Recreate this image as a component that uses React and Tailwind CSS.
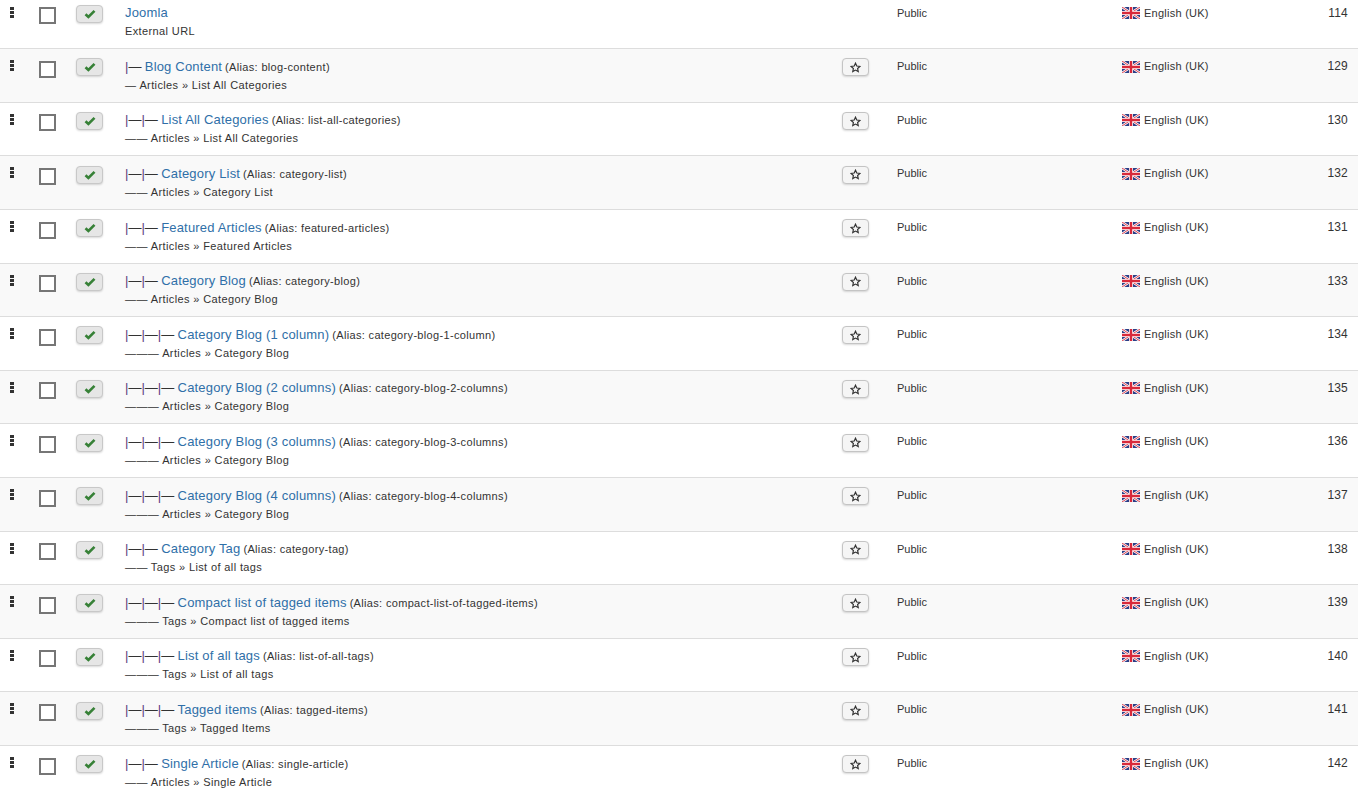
const rows = [
  { level: 0, title: "Joomla", alias: "", sub: "External URL", dashes: 0, id: 114, noStar: true },
  { level: 1, title: "Blog Content", alias: "blog-content", sub: "Articles » List All Categories", dashes: 1, id: 129 },
  { level: 2, title: "List All Categories", alias: "list-all-categories", sub: "Articles » List All Categories", dashes: 2, id: 130 },
  { level: 2, title: "Category List", alias: "category-list", sub: "Articles » Category List", dashes: 2, id: 132 },
  { level: 2, title: "Featured Articles", alias: "featured-articles", sub: "Articles » Featured Articles", dashes: 2, id: 131 },
  { level: 2, title: "Category Blog", alias: "category-blog", sub: "Articles » Category Blog", dashes: 2, id: 133 },
  { level: 3, title: "Category Blog (1 column)", alias: "category-blog-1-column", sub: "Articles » Category Blog", dashes: 3, id: 134 },
  { level: 3, title: "Category Blog (2 columns)", alias: "category-blog-2-columns", sub: "Articles » Category Blog", dashes: 3, id: 135 },
  { level: 3, title: "Category Blog (3 columns)", alias: "category-blog-3-columns", sub: "Articles » Category Blog", dashes: 3, id: 136 },
  { level: 3, title: "Category Blog (4 columns)", alias: "category-blog-4-columns", sub: "Articles » Category Blog", dashes: 3, id: 137 },
  { level: 2, title: "Category Tag", alias: "category-tag", sub: "Tags » List of all tags", dashes: 2, id: 138 },
  { level: 3, title: "Compact list of tagged items", alias: "compact-list-of-tagged-items", sub: "Tags » Compact list of tagged items", dashes: 3, id: 139 },
  { level: 3, title: "List of all tags", alias: "list-of-all-tags", sub: "Tags » List of all tags", dashes: 3, id: 140 },
  { level: 3, title: "Tagged items", alias: "tagged-items", sub: "Tags » Tagged Items", dashes: 3, id: 141 },
  { level: 2, title: "Single Article", alias: "single-article", sub: "Articles » Single Article", dashes: 2, id: 142 },
];

function DragHandle() {
  return (
    <div className="flex flex-col gap-[1px] w-[4px] ml-[10px] mt-[3px]">
      <div className="h-[3px] bg-[#333]" />
      <div className="h-[3px] bg-[#333]" />
      <div className="h-[3px] bg-[#333]" />
    </div>
  );
}

function CheckIcon() {
  return (
    <svg width="12" height="10" viewBox="0 0 12 10">
      <path d="M1.5 5.2 L4.4 8 L10.5 1.8" fill="none" stroke="#378137" strokeWidth="2.6" />
    </svg>
  );
}

function StarIcon() {
  return (
    <svg width="11" height="11" viewBox="0 0 12 12">
      <path
        d="M6 1.3 L7.4 4.4 L10.8 4.8 L8.3 7.1 L9 10.5 L6 8.8 L3 10.5 L3.7 7.1 L1.2 4.8 L4.6 4.4 Z"
        fill="none"
        stroke="#333"
        strokeWidth="1.3"
      />
    </svg>
  );
}

function UkFlag() {
  return (
    <svg width="18" height="12" viewBox="0 0 60 40" className="shrink-0 mt-[1px]">
      <rect width="60" height="40" fill="#2b3f87" />
      <path d="M0 0 L60 40 M60 0 L0 40" stroke="#fff" strokeWidth="8" />
      <path d="M0 0 L60 40 M60 0 L0 40" stroke="#d8293b" strokeWidth="3" />
      <path d="M30 0 V40 M0 20 H60" stroke="#fff" strokeWidth="13" />
      <path d="M30 0 V40 M0 20 H60" stroke="#d8293b" strokeWidth="8" />
    </svg>
  );
}

function TreeMarks({ level }) {
  if (level === 0) return null;
  const marks = [];
  for (let i = 0; i < level; i++) {
    marks.push(
      <span key={i}>
        <span className="text-[#5a3a80]">|</span>—
      </span>
    );
  }
  return <span className="text-[13px] text-[#333] mr-[3.4px]">{marks}</span>;
}

function MenuRow({ row, index }) {
  return (
    <div
      className={`flex h-[53.6px] border-t border-[#dddddd] ${index % 2 === 1 ? "bg-[#f9f9f9]" : "bg-white"}`}
    >
      <div className="w-[39px] pt-[8px]">
        <DragHandle />
      </div>
      <div className="w-[37px] pt-[11.6px]">
        <div className="w-[17px] h-[17px] border-2 border-[#767676] bg-white" />
      </div>
      <div className="w-[49px] pt-[9.2px]">
        <div className="w-[27px] h-[18px] rounded-[4px] border border-[#c8c8c8] bg-[#e6e6e6] shadow-[0_1px_2px_rgba(0,0,0,0.15)] flex items-center justify-center">
          <CheckIcon />
        </div>
      </div>
      <div className="w-[717px] pt-[7.6px]">
        <div className="leading-[18px] whitespace-nowrap">
          <TreeMarks level={row.level} />
          <a className="text-[13px] tracking-[0.18px] text-[#2f6fa8]">{row.title}</a>
          {row.alias && (
            <span className="text-[11px] tracking-[0.33px] text-[#333] ml-[3px]">(Alias: {row.alias})</span>
          )}
        </div>
        <div className="text-[11px] tracking-[0.38px] text-[#333] leading-[18px] whitespace-nowrap">
          {row.dashes > 0 && <span className="mr-[3px]">{"—".repeat(row.dashes)}</span>}
          {row.sub}
        </div>
      </div>
      <div className="w-[55px] pt-[9.2px]">
        {!row.noStar && (
          <div className="w-[27px] h-[18px] rounded-[4px] border border-[#c4c4c4] bg-[#f5f5f5] shadow-[0_1px_2px_rgba(0,0,0,0.15)] flex items-center justify-center">
            <StarIcon />
          </div>
        )}
      </div>
      <div className="w-[225px] pt-[8px] text-[11px] text-[#333] leading-[18px]">Public</div>
      <div className="w-[180px] pt-[8px] flex items-start gap-[4px] text-[11px] tracking-[0.25px] text-[#333] leading-[18px]">
        <span className="h-[18px] flex items-center"><UkFlag /></span>
        English (UK)
      </div>
      <div className="w-[46px] pt-[8px] text-right text-[12px] tracking-[0.2px] text-[#333] leading-[18px]">{row.id}</div>
    </div>
  );
}

export default function App() {
  return (
    <div className="w-[1358px] h-[791px] overflow-hidden bg-white font-['Liberation_Sans',Arial,sans-serif]">
      <div className="-mt-[5.3px]">
        {rows.map((row, i) => (
          <MenuRow key={row.id} row={row} index={i} />
        ))}
      </div>
    </div>
  );
}
